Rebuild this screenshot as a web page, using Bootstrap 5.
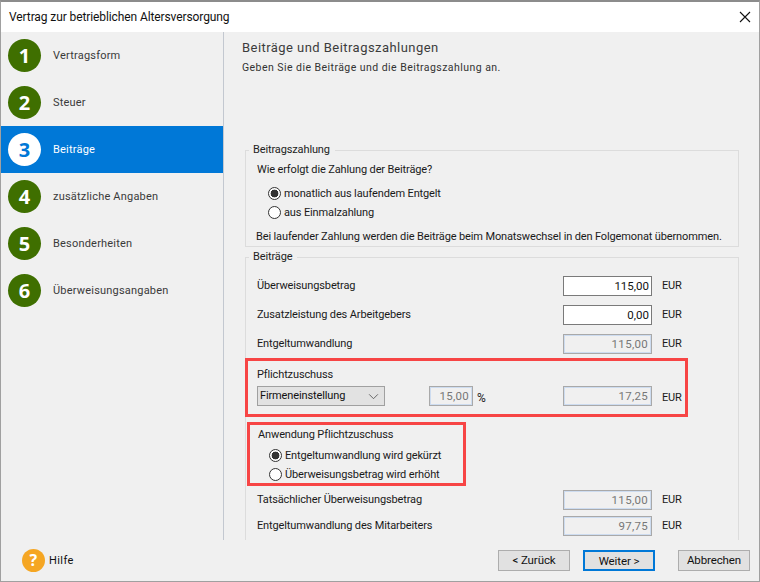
<!DOCTYPE html>
<html lang="de">
<head>
<meta charset="utf-8">
<title>Vertrag zur betrieblichen Altersversorgung</title>
<link rel="stylesheet" href="https://cdn.jsdelivr.net/npm/bootstrap@5.3.0/dist/css/bootstrap.min.css">
<style>
html,body{height:100%;margin:0;overflow:hidden;}
body{font-family:Roboto,"Open Sans",sans-serif;font-size:11px;letter-spacing:-.13px;color:#1a1a1a;background:#f0f0f0;line-height:14px;}
.dlg{width:760px;height:582px;border:1px solid #a0a0a0;border-top:2px solid #8c8c8c;background:#f0f0f0;}
.titlebar{height:30px;background:#fff;font-size:12px;letter-spacing:-.1px;padding-left:8px;padding-right:7px;color:#111;}
.mid{height:508px;}
.side{width:223px;border-right:1px solid #c3c8d0;flex:none;}
.step{height:47px;padding-left:7px;gap:12px;color:#3a3a3a;letter-spacing:.2px;}
.step span:last-child{margin-top:0;}
.step.on{background:#0078d7;color:#fff;}
.circ{width:33px;height:33px;border-radius:50%;background:#3f6f00;color:#fff;font-family:"Open Sans",sans-serif;font-weight:700;font-size:20px;flex:none;}
.step.on .circ{background:#fff;color:#0078d7;}
.main{flex:1;min-width:0;overflow:hidden;padding:8px 20px 0 18px;}
.head1{font-size:13px;line-height:16px;color:#3c3c3c;letter-spacing:.45px;margin:0;font-weight:400;}
.head2{line-height:14px;margin-top:5px;color:#333;letter-spacing:.45px;font-size:10.5px;}
.fs{border:1px solid #dcdcdc;margin:0 0 0 3px;padding:0 0 0 11px;}
.fs legend{float:none;width:auto;font-size:11px;letter-spacing:-.13px;line-height:14px;margin:0 0 0 -8px;padding:0 5px 0 4px;color:#222;}
.fs1{margin-top:68px;height:104px;}
.fs2{margin-top:3px;height:300px;}
.radio{gap:3px;height:19px;min-height:0;margin:0;}
.radio .form-check-input{width:13px;height:13px;margin:0;flex:none;border:1px solid #333;background-color:#fff;background-image:none;float:none;}
.radio .form-check-input:checked{background-color:#fff;border-color:#333;background-image:radial-gradient(circle,#333 0 3.6px,transparent 4.2px);}
.radio .form-check-label{line-height:14px;}
.q{line-height:14px;margin-top:6px;}
.rgrp{padding-left:11px;margin-top:7px;}
.note{margin-top:8px;line-height:14px;margin-left:-1px;white-space:nowrap;}
.frow{height:20px;}
.frow label,.frow span{white-space:nowrap;}
.lbl{width:306px;flex:none;}
.amt{width:89px;height:20px;flex:none;border:1px solid #7a7a7a;border-radius:0;background:#fff;padding:0 2px;font-size:11.5px;line-height:18px;text-align:right;color:#111;font-family:inherit;box-shadow:none;}
.amt:disabled{background:#f0f0f0;border:1px solid #a9a9a9;box-shadow:inset 0 0 0 1px #cddcf0;color:#777;letter-spacing:.3px;padding-right:3px;}
.unit{margin-left:10px;}
.fval{margin-bottom:9px;}
.first{margin-top:12px;}
.redbox{border:3px solid #f74545;}
.rb1{width:443px;height:59px;margin:4px 0 0 -12px;padding:7px 0 0 9px;}
.rb2{width:219px;height:64px;margin:5px 0 4px -10px;padding:3px 0 0 8px;}
.rb1 .t{line-height:14px;}
.rb1 .frow{margin-top:4px;}
.rb1 .unit,.pctu{margin-top:3px;}
.sel{width:128px;height:20px;flex:none;border:1px solid #a0a0a0;border-radius:0;background-color:#e2e2e2;padding:0 20px 0 2px;font-size:11px;letter-spacing:-.13px;line-height:18px;color:#111;font-family:inherit;background-image:url("data:image/svg+xml,%3csvg xmlns='http://www.w3.org/2000/svg' viewBox='0 0 12 8'%3e%3cpath d='M1 1.5l5 5 5-5' fill='none' stroke='%23555' stroke-width='1'/%3e%3c/svg%3e");background-size:11px 7px;background-position:right 5px center;box-shadow:none;}
.pct{width:44px;margin-left:44px;}
.pctu{margin-left:4px;width:86px;font-size:12px;}
.rb2 .t{line-height:14px;margin-bottom:4px;}
.rb2 .rlist{padding-left:11px;}
.gap8{margin-bottom:6px;}
.foot{height:40px;padding:0 9px 0 21px;}
.help{width:23px;height:23px;border-radius:50%;background:#f5a623;color:#fff;font-family:"Open Sans",sans-serif;font-weight:700;font-size:16px;flex:none;}
.hlp{gap:4px;color:#111;letter-spacing:.4px;font-size:11px;}
.hlp span:last-child{margin-top:2px;}
.wbtn{width:72px;height:21px;padding:0;border:1px solid #adadad;border-radius:0;background:#e1e1e1;font-size:11.5px;letter-spacing:-.1px;line-height:18px;color:#111;font-family:inherit;}
.wbtn.def{border:2px solid #0078d7;margin-left:13px;margin-right:23px;}
.closex{width:14px;height:14px;flex:none;}
</style>
</head>
<body>
<div class="dlg d-flex flex-column">
  <div class="titlebar d-flex align-items-center justify-content-between">
    <span>Vertrag zur betrieblichen Altersversorgung</span>
    <svg class="closex" viewBox="0 0 14 14" aria-label="Schließen"><path d="M2 2 L12 12 M12 2 L2 12" stroke="#111" stroke-width="1.1" fill="none"/></svg>
  </div>
  <div class="mid d-flex">
    <nav class="side d-flex flex-column">
      <div class="step d-flex align-items-center"><span class="circ d-flex align-items-center justify-content-center">1</span><span>Vertragsform</span></div>
      <div class="step d-flex align-items-center"><span class="circ d-flex align-items-center justify-content-center">2</span><span>Steuer</span></div>
      <div class="step on d-flex align-items-center"><span class="circ d-flex align-items-center justify-content-center">3</span><span>Beiträge</span></div>
      <div class="step d-flex align-items-center"><span class="circ d-flex align-items-center justify-content-center">4</span><span>zusätzliche Angaben</span></div>
      <div class="step d-flex align-items-center"><span class="circ d-flex align-items-center justify-content-center">5</span><span>Besonderheiten</span></div>
      <div class="step d-flex align-items-center"><span class="circ d-flex align-items-center justify-content-center">6</span><span>Überweisungsangaben</span></div>
    </nav>
    <main class="main">
      <h1 class="head1">Beiträge und Beitragszahlungen</h1>
      <div class="head2">Geben Sie die Beiträge und die Beitragszahlung an.</div>
      <fieldset class="fs fs1">
        <legend>Beitragszahlung</legend>
        <div class="q">Wie erfolgt die Zahlung der Beiträge?</div>
        <div class="rgrp">
          <div class="form-check radio d-flex align-items-center p-0"><input class="form-check-input" type="radio" name="z" id="z1" checked><label class="form-check-label" for="z1">monatlich aus laufendem Entgelt</label></div>
          <div class="form-check radio d-flex align-items-center p-0"><input class="form-check-input" type="radio" name="z" id="z2"><label class="form-check-label" for="z2">aus Einmalzahlung</label></div>
        </div>
        <div class="note">Bei laufender Zahlung werden die Beiträge beim Monatswechsel in den Folgemonat übernommen.</div>
      </fieldset>
      <fieldset class="fs fs2">
        <legend>Beiträge</legend>
        <div class="frow fval first d-flex align-items-center"><label class="lbl">Überweisungsbetrag</label><input class="form-control amt" value="115,00"><span class="unit">EUR</span></div>
        <div class="frow fval d-flex align-items-center"><label class="lbl">Zusatzleistung des Arbeitgebers</label><input class="form-control amt" value="0,00"><span class="unit">EUR</span></div>
        <div class="frow d-flex align-items-center"><label class="lbl">Entgeltumwandlung</label><input class="form-control amt" value="115,00" disabled><span class="unit">EUR</span></div>
        <div class="redbox rb1">
          <div class="t">Pflichtzuschuss</div>
          <div class="frow d-flex align-items-center">
            <select class="form-select sel"><option>Firmeneinstellung</option></select>
            <input class="form-control amt pct" value="15,00" disabled><span class="pctu">%</span>
            <input class="form-control amt" value="17,25" disabled><span class="unit">EUR</span>
          </div>
        </div>
        <div class="redbox rb2">
          <div class="t">Anwendung Pflichtzuschuss</div>
          <div class="rlist">
            <div class="form-check radio d-flex align-items-center p-0"><input class="form-check-input" type="radio" name="a" id="a1" checked><label class="form-check-label" for="a1">Entgeltumwandlung wird gekürzt</label></div>
            <div class="form-check radio d-flex align-items-center p-0"><input class="form-check-input" type="radio" name="a" id="a2"><label class="form-check-label" for="a2">Überweisungsbetrag wird erhöht</label></div>
          </div>
        </div>
        <div class="frow gap8 d-flex align-items-center"><label class="lbl">Tatsächlicher Überweisungsbetrag</label><input class="form-control amt" value="115,00" disabled><span class="unit">EUR</span></div>
        <div class="frow d-flex align-items-center"><label class="lbl">Entgeltumwandlung des Mitarbeiters</label><input class="form-control amt" value="97,75" disabled><span class="unit">EUR</span></div>
      </fieldset>
    </main>
  </div>
  <div class="foot d-flex align-items-center justify-content-between">
    <div class="hlp d-flex align-items-center"><span class="help d-flex align-items-center justify-content-center">?</span><span>Hilfe</span></div>
    <div class="d-flex">
      <button type="button" class="btn wbtn">&lt; Zurück</button>
      <button type="button" class="btn wbtn def">Weiter &gt;</button>
      <button type="button" class="btn wbtn">Abbrechen</button>
    </div>
  </div>
</div>
<script src="https://cdn.jsdelivr.net/npm/bootstrap@5.3.0/dist/js/bootstrap.bundle.min.js"></script>
</body>
</html>
